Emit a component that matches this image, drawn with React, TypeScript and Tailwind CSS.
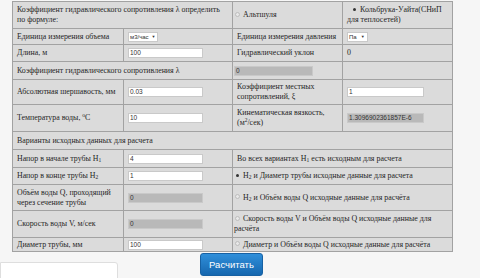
import React from "react";

function Field({ v, gray, w }: { v: string; gray?: boolean; w: string }) {
  return (
    <div
      className={`h-[10px] ${w} border border-[#c9c9c9] ${gray ? "bg-[#b9b9b9]" : "bg-white"} text-[6.5px] leading-[8px] pl-[1px] [font-family:'Liberation_Sans',sans-serif] text-[#333] overflow-hidden whitespace-nowrap`}
    >
      {v}
    </div>
  );
}

function Radio({ on }: { on?: boolean }) {
  return (
    <span className="inline-flex w-[6px] h-[6px] mr-[3px] rounded-full items-center justify-center align-middle relative top-[-1px]">
      {on ? (
        <span className="w-[3px] h-[3px] rounded-full bg-[#333]" />
      ) : (
        <span className="w-[5px] h-[5px] rounded-full border border-[#bdbdbd] bg-[#e8e8e8]" />
      )}
    </span>
  );
}

const td = "border border-[#a2a2a2] bg-[#dbdbdb] px-[4px] py-0 align-middle";

export default function App() {
  return (
    <div className="w-[480px] h-[278px] overflow-hidden bg-[#f6f6f6] [font-family:'Liberation_Serif',serif] text-[7.9px] leading-[10px] text-[#262626]">
      <div className="pl-[12px] pt-[1px]">
        <table className="table-fixed border-collapse w-[440px] border border-[#7d7d7d]">
          <colgroup>
            <col className="w-[111px]" />
            <col className="w-[109px]" />
            <col className="w-[110px]" />
            <col className="w-[110px]" />
          </colgroup>
          <tbody>
            <tr className="h-[27px]">
              <td className={td} colSpan={2}>
                Коэффициент гидравлического сопротивления λ определить<br />по формуле:
              </td>
              <td className={`${td} pl-[1px]`}>
                <Radio />
                Альтшуля
              </td>
              <td className={td}>
                <span className="pl-[4px]"><Radio on /></span>
                Кольбрука-Уайта(СНиП<br />для теплосетей)
              </td>
            </tr>
            <tr className="h-[16px]">
              <td className={`${td} whitespace-nowrap`}>Единица измерения объема</td>
              <td className={td}>
                <div className="h-[10px] w-[30px] bg-white border border-[#c9c9c9] flex items-center text-[6px] whitespace-nowrap [font-family:'Liberation_Sans',sans-serif] pl-[1px] gap-[3px] text-[#333]">
                  м3/час <span className="text-[4px]">▼</span>
                </div>
              </td>
              <td className={`${td} whitespace-nowrap`}>Единица измерения давления</td>
              <td className={td}>
                <div className="h-[10px] w-[21px] bg-white border border-[#c9c9c9] flex items-center text-[6px] whitespace-nowrap [font-family:'Liberation_Sans',sans-serif] pl-[1px] gap-[4px] text-[#333]">
                  Па <span className="text-[4px]">▼</span>
                </div>
              </td>
            </tr>
            <tr className="h-[17px]">
              <td className={td}>Длина, м</td>
              <td className={td}><Field v="100" w="w-[75px]" /></td>
              <td className={td}>Гидравлический уклон</td>
              <td className={td}>0</td>
            </tr>
            <tr className="h-[18px]">
              <td className={td} colSpan={2}>Коэффициент гидравлического сопротивления λ</td>
              <td className={`${td} pl-[1px]`}><Field v="0" gray w="w-[79px]" /></td>
              <td className={td}></td>
            </tr>
            <tr className="h-[25px]">
              <td className={`${td} whitespace-nowrap`}>Абсолютная шершавость, мм</td>
              <td className={td}><Field v="0.03" w="w-[75px]" /></td>
              <td className={td}>Коэффициент местных<br />сопротивлений, ξ</td>
              <td className={td}><Field v="1" w="w-[77px]" /></td>
            </tr>
            <tr className="h-[27px]">
              <td className={td}>Температура воды, <sup className="text-[5.5px]">o</sup>C</td>
              <td className={td}><Field v="10" w="w-[75px]" /></td>
              <td className={td}>Кинематическая вязкость,<br />(м<sup className="text-[5.5px]">2</sup>/сек)</td>
              <td className={td}><Field v="1.3096902361857E-6" gray w="w-[77px]" /></td>
            </tr>
            <tr className="h-[18px]">
              <td className={td} colSpan={4}>Варианты исходных данных для расчета</td>
            </tr>
            <tr className="h-[18px]">
              <td className={td}>Напор в начале трубы H<sub className="text-[5.5px]">1</sub></td>
              <td className={td}><Field v="4" w="w-[75px]" /></td>
              <td className={td} colSpan={2}>Во всех вариантах H<sub className="text-[5.5px]">1</sub> есть исходным для расчета</td>
            </tr>
            <tr className="h-[17px]">
              <td className={td}>Напор в конце трубы H<sub className="text-[5.5px]">2</sub></td>
              <td className={td}><Field v="1" w="w-[75px]" /></td>
              <td className={`${td} pl-[1px]`} colSpan={2}>
                <Radio on />
                H<sub className="text-[5.5px]">2</sub> и Диаметр трубы исходные данные для расчета
              </td>
            </tr>
            <tr className="h-[26px]">
              <td className={td}>Объём воды Q, проходящий<br />через сечение трубы</td>
              <td className={td}><Field v="0" gray w="w-[75px]" /></td>
              <td className={`${td} pl-[1px]`} colSpan={2}>
                <Radio />
                H<sub className="text-[5.5px]">2</sub> и Объём воды Q исходные данные для расчёта
              </td>
            </tr>
            <tr className="h-[27px]">
              <td className={td}>Скорость воды V, м/сек</td>
              <td className={td}><Field v="0" gray w="w-[75px]" /></td>
              <td className={`${td} pl-[1px]`} colSpan={2}>
                <Radio />
                Скорость воды V и Объём воды Q исходные данные для<br />расчёта
              </td>
            </tr>
            <tr className="h-[14px]">
              <td className={`${td} whitespace-nowrap`}>Диаметр трубы, мм</td>
              <td className={td}><Field v="100" w="w-[75px]" /></td>
              <td className={`${td} pl-[1px] whitespace-nowrap`} colSpan={2}>
                <Radio />
                Диаметр и Объём воды Q исходные данные для расчёта
              </td>
            </tr>
          </tbody>
        </table>
      </div>
      <div className="flex items-start">
        <div className="mt-[10px] w-[118px] h-[30px] bg-white border border-[#dedede] rounded-tr-[3px]" />
        <button className="ml-[82px] mt-[1px] w-[63px] h-[23px] rounded-[3px] bg-linear-to-b from-[#2f8fda] to-[#1667af] border border-[#1761a3] text-white text-[9.5px] [font-family:'Liberation_Sans',sans-serif]">
          Расчитать
        </button>
      </div>
    </div>
  );
}
